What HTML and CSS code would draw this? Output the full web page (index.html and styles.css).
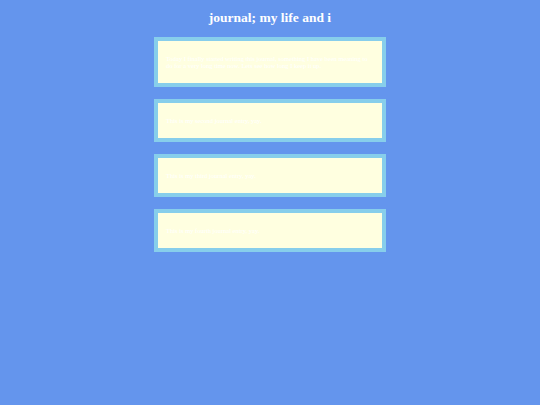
FILE: index.html
```html
<!DOCTYPE html>
<html lang="en">
<head>
    <meta charset="UTF-8">
    <meta name="viewport" content="width=device-width, initial-scale=1.0">
    <title>journal; my life and i</title>
    <link rel="stylesheet" href="styles.css">
</head>
<body>
    <h1>journal; my life and i</h1>

    <div class="entries">
        <div class="entry">
            Today I finally started writing this journal, something I have been meaning to do for a very long
            time now. Lets see how long I keep it up.
        </div>
        <div class="entry">This is my second journal entry, yay.</div>
        <div class="entry">This is my third journal entry, yay.</div>
        <div class="entry">This is my fourth journal entry, yay.</div>
    </div>
</body>
</html>
```

FILE: styles.css
```css
body {
    margin: 0;
    padding: 10px 0;
    background-color: cornflowerblue;
    font-family: "Liberation Serif", "Times New Roman", serif;
}
h1 {
    margin: 0 0 11px;
    text-align: center;
    color: white;
    font-size: 13.5px;
    line-height: 16px;
    font-weight: bold;
}
.entries {
    display: flex;
    flex-direction: column;
    align-items: center;
    gap: 12px;
}
.entry {
    box-sizing: border-box;
    width: 232px;
    padding: 14px 8px;
    background: lightyellow;
    border: 4px solid skyblue;
    color: white;
    font-size: 6.5px;
    line-height: 7px;
}
```
